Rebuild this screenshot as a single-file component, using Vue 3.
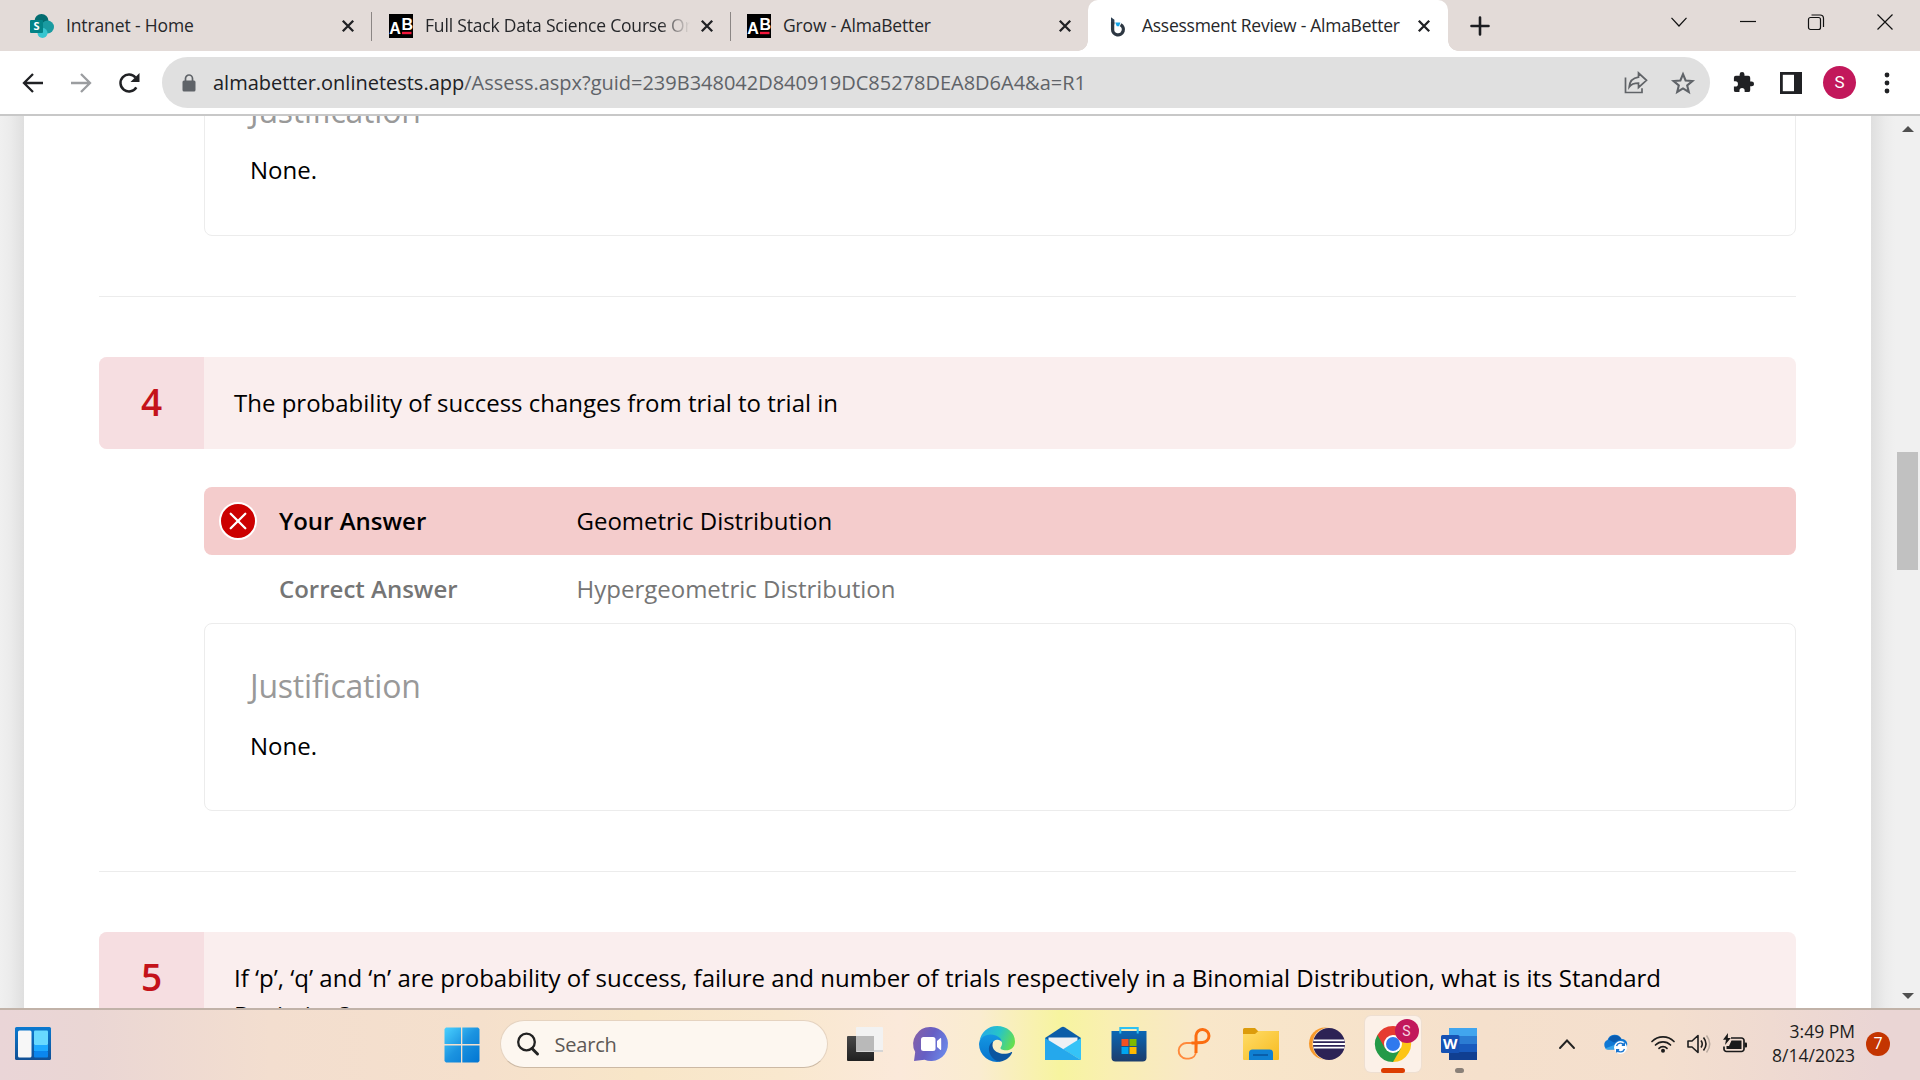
<script setup>
import { ref } from 'vue'

const tabs = ref([
  { title: 'Intranet - Home', icon: 'sp', spacing: '-0.13px' },
  { title: 'Full Stack Data Science Course Online', icon: 'ab', spacing: '-0.18px' },
  { title: 'Grow - AlmaBetter', icon: 'ab', spacing: '-0.17px' },
  { title: 'Assessment Review - AlmaBetter', icon: 'b', active: true, spacing: '-0.27px' },
])

const questions = ref([
  { number: 3, justification: 'None.', partial: true },
  {
    number: 4,
    text: 'The probability of success changes from trial to trial in',
    yours: 'Geometric Distribution',
    correct: 'Hypergeometric Distribution',
    justification: 'None.',
  },
  {
    number: 5,
    text: 'If ‘p’, ‘q’ and ‘n’ are probability of success, failure and number of trials respectively in a Binomial Distribution, what is its Standard Deviation?',
  },
])
</script>

<template>
  <div class="screen">
    <header class="tabstrip">
      <div v-for="(tab, i) in tabs" :key="i" class="tab" :class="['tab-' + i, { active: tab.active }]">
        <svg v-if="tab.icon === 'sp'" class="fav" viewBox="0 0 24 24">
          <circle cx="11.5" cy="7" r="7" fill="#036c70" />
          <circle cx="17.5" cy="13" r="6.5" fill="#1a9ba1" />
          <circle cx="12.5" cy="19" r="5" fill="#37c6d0" />
          <rect x="0" y="6" width="13" height="13" rx="1" fill="#038387" />
          <text x="6.5" y="16.4" text-anchor="middle" class="fav-s">S</text>
        </svg>
        <svg v-else-if="tab.icon === 'ab'" class="fav" viewBox="0 0 24 24">
          <rect width="24" height="24" fill="#000" />
          <text x="0.3" y="20.2" class="fav-ab">A</text>
          <text x="12.6" y="16.4" class="fav-ab">B</text>
          <rect x="13" y="17.8" width="9.5" height="2.4" fill="#f5163b" />
        </svg>
        <svg v-else class="fav" viewBox="0 0 24 24">
          <path d="M5 3.200l3.400 2.600v4.400L5 13z" fill="#2d3e50" />
          <path d="M6.600 8v7.500a5.400 5.400 0 1 0 8-4.700" fill="none" stroke="#2d3742" stroke-width="3.300" />
          <path d="M9.200 8.500h5.200l-1.300 3.800h-2.300z" fill="#14a5ea" />
        </svg>
        <span class="title" :style="{ letterSpacing: tab.spacing }">{{ tab.title }}</span>
        <svg class="x" viewBox="0 0 14 14"><path d="M1.800 1.800l10.400 10.400M12.200 1.800L1.800 12.200" stroke="#202124" stroke-width="2.300" /></svg>
      </div>
      <svg class="plus" viewBox="0 0 18 18"><path d="M9 0.500v17M0.500 9h17" stroke="#1b1c20" stroke-width="2.600" stroke-linecap="round" /></svg>
      <div class="winbtns">
        <svg viewBox="0 0 18 18"><path d="M1.500 4.800L9 13l7.500-8.200" /></svg>
        <svg viewBox="0 0 18 18"><path d="M1 8.500h16" /></svg>
        <svg viewBox="0 0 18 18"><rect x="1.500" y="4.500" width="12" height="12" rx="2" /><path d="M4.500 2h8.500a3.500 3.500 0 0 1 3.500 3.500v8.500" /></svg>
        <svg viewBox="0 0 18 18"><path d="M1.500 1.500l15 15M16.500 1.500l-15 15" /></svg>
      </div>
    </header>

    <nav class="toolbar">
      <svg class="nav back" viewBox="0 0 22 22"><path d="M21 11H2.500M11 2L2 11l9 9" fill="none" stroke="#202124" stroke-width="2.300" /></svg>
      <svg class="nav fwd" viewBox="0 0 22 22"><path d="M1 11h18.500M11 2l9 9-9 9" fill="none" stroke="#9b9da0" stroke-width="2.300" /></svg>
      <svg class="nav reload" viewBox="0 0 22 22">
        <path d="M18.300 15.300A8.500 8.500 0 1 1 17.500 5.500" fill="none" stroke="#202124" stroke-width="2.500" />
        <path d="M21.500 1v9h-9z" fill="#202124" />
      </svg>
      <div class="omnibox">
        <svg class="lock" viewBox="0 0 14 18"><rect x="0.500" y="6.500" width="13" height="11" rx="1.500" fill="#5f6368" /><path d="M3.500 7V4.500a3.500 3.500 0 0 1 7 0V7" fill="none" stroke="#5f6368" stroke-width="1.700" /></svg>
        <span class="url"><b>almabetter.onlinetests.app</b><i>/Assess.aspx?guid=239B348042D840919DC85278DEA8D6A4&amp;a=R1</i></span>
        <svg class="share" viewBox="0 0 24 24"><path d="M1.500 6.500V21.500H18v-4.300M14.500 2L22.500 9.300l-8 7.200v-4.300c-4.300 0-7.300 1-9.300 3.800 .4-5.400 3.500-9 9.300-9.800z" fill="none" stroke="#606367" stroke-width="1.700" /></svg>
        <svg class="star" viewBox="0 0 24 24"><path d="M12 3.200l2.600 6.300 6.800.5-5.200 4.400 1.600 6.600-5.800-3.600-5.800 3.600 1.600-6.600-5.200-4.400 6.800-.5z" fill="none" stroke="#5f6368" stroke-width="2.100" /></svg>
      </div>
      <svg class="puzzle" viewBox="0 0 24 24"><path d="M20.500 11H19V7a2 2 0 0 0-2-2h-4V3.500a2.500 2.500 0 0 0-5 0V5H4a2 2 0 0 0-2 2v3.800h1.500a2.700 2.700 0 0 1 0 5.400H2V20a2 2 0 0 0 2 2h3.800v-1.500a2.700 2.700 0 0 1 5.400 0V22H17a2 2 0 0 0 2-2v-4h1.500a2.500 2.500 0 0 0 0-5z" fill="#202124" /></svg>
      <svg class="panel" viewBox="0 0 22 22"><rect x="1.400" y="1.400" width="19.200" height="19.200" fill="none" stroke="#202124" stroke-width="2.800" /><rect x="14" y="1" width="7" height="20" fill="#202124" /></svg>
      <div class="avatar">S</div>
      <svg class="dots" viewBox="0 0 6 22"><circle cx="3" cy="3" r="2.400" /><circle cx="3" cy="11" r="2.400" /><circle cx="3" cy="19" r="2.400" /></svg>
    </nav>

    <main class="page">
      <div class="gutter left"></div>
      <div class="sheet">
        <section v-for="q in questions" :key="q.number" class="question" :class="{ partial: q.partial }">
          <div v-if="q.text" class="qhead">
            <div class="num">{{ q.number }}</div>
            <div class="qtext">{{ q.text }}</div>
          </div>
          <div v-if="q.yours" class="answer wrong">
            <svg class="mark" viewBox="0 0 38 38"><circle cx="19" cy="19" r="18" fill="#c00" stroke="#fff" stroke-width="2" /><path d="M11.700 11.700l14.600 14.600M26.300 11.700L11.700 26.300" stroke="#fff" stroke-width="2.300" stroke-linecap="round" /></svg>
            <strong>Your Answer</strong><span>{{ q.yours }}</span>
          </div>
          <div v-if="q.correct" class="answer right"><strong>Correct Answer</strong><span>{{ q.correct }}</span></div>
          <div v-if="q.justification" class="just">
            <h3>Justification</h3>
            <p>{{ q.justification }}</p>
          </div>
          <div v-if="q.justification" class="rule"></div>
        </section>
      </div>
      <div class="gutter rightside"></div>
      <div class="scrollbar">
        <svg viewBox="0 0 12 6"><path d="M0 6L6 0l6 6z" fill="#505050" /></svg>
        <div class="thumb"></div>
        <svg class="down" viewBox="0 0 12 6"><path d="M0 0h12L6 6z" fill="#505050" /></svg>
      </div>
    </main>

    <footer class="taskbar">
      <svg class="widgets" viewBox="0 0 36 33">
        <defs><linearGradient id="wg" x2="0" y2="1"><stop stop-color="#0a79d0" /><stop offset="1" stop-color="#114f94" /></linearGradient></defs>
        <rect width="36" height="33" rx="1.500" fill="url(#wg)" />
        <rect x="3" y="3.500" width="13.500" height="27" rx="1.500" fill="#f7f7f7" />
        <rect x="19" y="3.500" width="14" height="14.500" rx="1" fill="#68d9ff" />
        <rect x="19" y="18" width="14" height="6" fill="#1da9ff" />
        <rect x="19" y="24" width="14" height="6.500" rx="1" fill="#0b86ee" />
      </svg>
      <svg class="start" viewBox="0 0 36 36">
        <defs><linearGradient id="st" x2="1" y2="1"><stop stop-color="#4ad1ff" /><stop offset=".5" stop-color="#1b93e0" /><stop offset="1" stop-color="#0275d2" /></linearGradient></defs>
        <path d="M2 0.500h15v16.500H0.500V2zM18.300 0.500H34l1.500 1.500v15H18.300zM0.500 18.600H17v16.900H2L0.500 34zM18.300 18.600h17.200V34L34 35.500H18.300z" fill="url(#st)" />
      </svg>
      <div class="search">
        <svg viewBox="0 0 24 24"><circle cx="10.500" cy="10" r="8.300" fill="none" stroke="#222" stroke-width="2.300" /><path d="M16 16.500l5.500 5.500" stroke="#222" stroke-width="3" stroke-linecap="round" /></svg>
        <span>Search</span>
      </div>
      <div class="apps">
        <div class="app">
          <svg viewBox="0 0 36 36">
            <defs><linearGradient id="tv" x2="0" y2="1"><stop stop-color="#484848" /><stop offset="1" stop-color="#202020" /></linearGradient></defs>
            <rect x="0" y="10" width="27" height="25" rx="1" fill="url(#tv)" /><rect x="9" y="1" width="27" height="25" rx="1" fill="#f2f2f2" /><rect x="9" y="10" width="18" height="15" fill="#b9b9b9" /><path d="M9 25h27" stroke="#b9b9b9" />
          </svg>
        </div>
        <div class="app">
          <svg viewBox="0 0 36 36">
            <defs><linearGradient id="ct" x1="0" y1=".2" x2="1" y2=".6"><stop stop-color="#8560a8" /><stop offset=".5" stop-color="#665fc4" /><stop offset="1" stop-color="#6a86e8" /></linearGradient></defs>
            <path d="M18 1a17 17 0 1 1-6.500 32.700L1 35l1.200-9A17 17 0 0 1 18 1z" fill="url(#ct)" />
            <rect x="8" y="11" width="14.500" height="14" rx="2.500" fill="#fff" /><path d="M24 15l3.200-2.700q1-.7 1 .7v10q0 1.400-1 .7L24 21z" fill="#fff" />
          </svg>
        </div>
        <div class="app">
          <svg viewBox="0 0 36 36">
            <defs>
              <linearGradient id="eg" x1="0" y1=".3" x2="1" y2=".6"><stop stop-color="#25a9e8" /><stop offset=".5" stop-color="#27c4c8" /><stop offset="1" stop-color="#66df4d" /></linearGradient>
              <linearGradient id="eb" x2="0" y2="1"><stop stop-color="#1497e2" /><stop offset="1" stop-color="#0873cc" /></linearGradient>
            </defs>
            <path d="M0.500 15.500C2 6 9 0 18 0c10 0 18 6.500 18 15.500 0 5.500-4 8.800-9 8.800-4 0-5.500-1.300-5.500-2.300 0-.8 1.600-2 1.600-4.700C23 13 18 9.500 12 9.500 5 9.500 1.500 13 .5 15.500z" fill="url(#eg)" />
            <path d="M0 18C0.500 12 5.500 8.600 11.500 8.600c7 0 11 4 11.500 7.500-1-1.500-2.800-2.500-5-2.300-4 .4-6.500 5-5.500 10 1 6 5 10 9.500 11.700A18 18 0 0 1 0 18z" fill="url(#eb)" />
            <path d="M14 15.500c-4 2.500-5.200 7.500-3 12.500 2.300 5 6.500 7.500 11 7.500 5-1 9-4.500 11-8.500.4-.9-.3-1.200-1-.8-7 3.500-18 .8-18.500-6.500 0-1.700.2-3 .5-4.200z" fill="#0c55a0" />
          </svg>
        </div>
        <div class="app">
          <svg viewBox="0 0 36 36">
            <path d="M0 12L16 1.500q2-1.300 4 0L36 12v6H0z" fill="#0b5da8" /><path d="M3.500 11.500h29V25h-29z" fill="#eef1f5" /><path d="M36 12L18 23.300 36 34z" fill="#35c3f7" /><path d="M0 12v22h36z" fill="#25a8ec" />
          </svg>
        </div>
        <div class="app">
          <svg viewBox="0 0 36 36">
            <defs><linearGradient id="so" x2="0" y2="1"><stop stop-color="#0a67b5" /><stop offset="1" stop-color="#1c3d6c" /></linearGradient></defs>
            <path d="M0.500 5h35v26.500a4 4 0 0 1-4 4h-27a4 4 0 0 1-4-4z" fill="url(#so)" /><path d="M9.300 7.500V2h17.400v5.500" fill="none" stroke="#2dc1f2" stroke-width="2" />
            <path d="M10.500 13h7v7h-7z" fill="#f25022" /><path d="M18.500 13h7v7h-7z" fill="#7fba00" /><path d="M10.500 21h7v7h-7z" fill="#00a4ef" /><path d="M18.500 21h7v7h-7z" fill="#ffb900" />
          </svg>
        </div>
        <div class="app">
          <svg viewBox="0 0 36 36">
            <path d="M19.500 17H10a7.500 7.500 0 0 0-1 15.600h3c4 0 7-3 7-8z" fill="none" stroke="#ff8a3c" stroke-width="1.900" />
            <path d="M19 27V9.500a6.500 6.500 0 1 1 6.500 6.900L14.500 17" fill="none" stroke="#fb6d10" stroke-width="3" />
          </svg>
        </div>
        <div class="app">
          <svg viewBox="0 0 36 36">
            <defs><linearGradient id="fo" x2="1" y2="1"><stop stop-color="#ffdc68" /><stop offset="1" stop-color="#f7bb20" /></linearGradient></defs>
            <path d="M0 3.500a1.500 1.500 0 0 1 1.500-1.500H12l3 3h20a1 1 0 0 1 1 1v6H0z" fill="#dc9c0c" /><path d="M0 8h12l3.500-3H35a1 1 0 0 1 1 1v27a1 1 0 0 1-1 1H1a1 1 0 0 1-1-1z" fill="url(#fo)" />
            <path d="M6 34V27a3.500 3.500 0 0 1 3.500-3.500h17A3.500 3.500 0 0 1 30 27v7z" fill="#0f80d2" /><path d="M10 29h15" stroke="#0a5ba4" stroke-width="1.800" />
          </svg>
        </div>
        <div class="app">
          <svg viewBox="0 0 36 36"><circle cx="16" cy="17.500" r="16" fill="#f79a2c" /><circle cx="20" cy="18" r="16.500" fill="#fae4c8" /><circle cx="20" cy="18" r="16" fill="#2c2255" /><path d="M4.500 14.400h31M4 18h32M4.500 21.600h31" stroke="#fff" stroke-width="1.900" /></svg>
        </div>
        <div class="app current">
          <svg viewBox="0 0 36 36">
            <path d="M18 18L2.410 9A18 18 0 0 1 33.590 9z" fill="#e63c30" /><path d="M18 18L33.590 9A18 18 0 0 1 18 36z" fill="#fdc516" /><path d="M18 18v18A18 18 0 0 1 2.410 9z" fill="#249a48" />
            <path d="M18 9h15.600l-7.800 13.500z" fill="#fdc516" /><path d="M25.800 22.500L18 36 10.200 22.500z" fill="#249a48" /><path d="M10.200 22.500L2.410 9 18 9z" fill="#e63c30" /><circle cx="18" cy="18" r="9" fill="#fff" /><circle cx="18" cy="18" r="7" fill="#3079ee" />
          </svg>
          <span class="badge">S</span>
        </div>
        <div class="app word">
          <svg viewBox="0 0 36 36">
            <path d="M8 2h28v8H8z" fill="#41a5ee" /><path d="M8 10h28v8H8z" fill="#2b7cd3" /><path d="M8 18h28v8H8z" fill="#185abd" /><path d="M8 26h28v8H8z" fill="#103f91" />
            <rect x="0" y="9" width="18.500" height="18" rx="1.500" fill="#1652b4" /><text x="9.200" y="23" text-anchor="middle" class="w">W</text>
          </svg>
        </div>
      </div>
      <div class="tray">
        <svg class="up" viewBox="0 0 16 10"><path d="M1 9l7-7.500L15 9" fill="none" stroke="#222" stroke-width="1.900" stroke-linecap="round" /></svg>
        <svg class="cloud" viewBox="0 0 24 20">
          <path d="M5 15.500A5 5 0 0 1 4.500 6 7.500 7.500 0 0 1 18.500 5a5 5 0 0 1 1 10.500z" fill="#1078d4" /><path d="M4 15.500a4.500 4.500 0 0 1-2-1L14 10v5.500z" fill="#35a4ea" /><path d="M5.500 5.500A7.500 7.500 0 0 1 18.500 5L11 8.500z" fill="#0a5cb0" />
          <circle cx="17.500" cy="13.500" r="6.500" fill="#fff" /><path d="M13.500 12a4.200 4.200 0 0 1 7.500-1M21.500 15a4.200 4.200 0 0 1-7.500 1M21.300 8.500V11.300h-2.500M13.700 18.500v-2.800h2.500" fill="none" stroke="#1a75cf" stroke-width="1.400" />
        </svg>
        <svg class="wifi" viewBox="0 0 24 18"><g fill="none" stroke="#1d1d1d" stroke-width="1.700" stroke-linecap="round"><path d="M1 6.500a15.500 15.500 0 0 1 22 0M4.500 10a10.600 10.600 0 0 1 15 0M8 13.300a5.600 5.600 0 0 1 8 0" /></g><circle cx="12" cy="15.700" r="2" fill="#1d1d1d" /></svg>
        <svg class="vol" viewBox="0 0 24 20"><path d="M1 7h4l6-5.500v17L5 13H1z M14 6.500q2.500 3.500 0 7M16.500 3.500q5 6.500 0 13" fill="none" stroke="#1d1d1d" stroke-width="1.600" stroke-linejoin="round" /><path d="M19.500 1.500q6.500 8.500 0 17" fill="none" stroke="#b9aaa0" stroke-width="1.500" /></svg>
        <svg class="bat" viewBox="0 0 24 20"><path d="M8 4h10.500a2.500 2.500 0 0 1 2.500 2.500v8.500a2.500 2.500 0 0 1-2.500 2.500h-15A2.500 2.500 0 0 1 1 15V12.500" fill="none" stroke="#1a1a1a" stroke-width="1.700" /><path d="M8.500 6.500h10v8.500h-15V12h2.500z" fill="#1a1a1a" /><rect x="21.500" y="8.500" width="2.500" height="5" rx="1" fill="#1a1a1a" /><path d="M5 -1L0 5.800h3L2 11l5.800-7H4.800z" fill="#1a1a1a" /></svg>
        <div class="clock"><span>3:49 PM</span><span>8/14/2023</span></div>
        <div class="count">7</div>
      </div>
    </footer>
  </div>
</template>

<style>
body { margin: 0; overflow: hidden; }
</style>

<style scoped>
* { box-sizing: border-box; }
.screen { width: 1920px; height: 1080px; display: flex; flex-direction: column; overflow: hidden; background: #fff; font-family: "Open Sans", "Noto Sans", sans-serif; }
svg { display: block; flex: none; overflow: visible; }

.tabstrip { height: 51px; flex: none; display: flex; align-items: center; background: #e3dbd8; position: relative; }
.tab { height: 51px; display: flex; align-items: center; position: relative; flex: none; }
.tab-0 { width: 371px; padding: 0 16px 0 30px; }
.tab-1 { width: 359px; padding: 0 16px 0 18px; }
.tab-2 { width: 358px; padding: 0 16px 0 17px; }
.tab-3 { width: 360px; padding: 0 17.500px 0 18px; }
.tab-0::after, .tab-1::after { content: ""; position: absolute; right: -1px; top: 12px; width: 1px; height: 29px; background: #8b8684; }
.active { background: #fff; border-radius: 10px 10px 0 0; }
.active::before, .active::after { content: ""; position: absolute; bottom: 0; width: 10px; height: 10px; }
.active::before { left: -10px; background: radial-gradient(circle at 0 0, transparent 9.500px, #fff 10px); }
.active::after { right: -10px; background: radial-gradient(circle at 100% 0, transparent 9.500px, #fff 10px); }
.fav { width: 24px; height: 24px; }
.fav-s { font: 700 11px "Open Sans", sans-serif; fill: #fff; }
.fav-ab { font: 700 16px "Liberation Sans", sans-serif; fill: #fff; }
.title { flex: 1; margin: 0 12px; padding-bottom: 1px; font-size: 17.500px; line-height: 26px; color: #26272a; white-space: nowrap; overflow: hidden; min-width: 0; }
.tab-1 .title { margin-right: 8px; mask-image: linear-gradient(90deg, #000 235px, transparent 265px); }
.tab-3 .title { margin: 0 8px 0 12px; }
.x { width: 14px; height: 14px; }
.plus { width: 18px; height: 18px; margin-left: 23px; }
.winbtns { margin-left: auto; display: flex; gap: 50.700px; padding: 0 26px 8px 0; }
.winbtns svg { width: 18px; height: 18px; fill: none; stroke: #111; stroke-width: 1.200; }

.toolbar { height: 65px; flex: none; display: flex; align-items: center; border-bottom: 2px solid #c8c8c8; padding-left: 22px; background: #fff; }
.nav { width: 22px; height: 22px; }
.fwd { margin-left: 26px; }
.reload { margin-left: 26px; }
.omnibox { margin-left: 22px; width: 1548px; height: 51px; border-radius: 26px; background: #e0e0e0; display: flex; align-items: center; padding: 0 15px 0 20px; flex: none; }
.lock { width: 14px; height: 18px; }
.url { margin-left: 17px; font-size: 20px; line-height: 30px; letter-spacing: -0.010px; white-space: nowrap; flex: 1; }
.url b { font-weight: 400; color: #202124; }
.url i { font-style: normal; color: #5f6368; }
.share { width: 24px; height: 24px; margin-right: 23.500px; }
.star { width: 24px; height: 24px; }
.puzzle { width: 23px; height: 23px; margin-left: 22px; }
.panel { width: 22px; height: 22px; margin-left: 25px; }
.avatar { width: 33px; height: 33px; margin-left: 21px; border-radius: 50%; background: #c2185b; color: #fff; font: 17px/33px Roboto, sans-serif; text-align: center; flex: none; }
.dots { width: 6px; height: 22px; margin-left: 28px; fill: #202124; }

.page { height: 892px; flex: none; display: flex; overflow: hidden; background: #f0f0f0; }
.gutter { flex: none; }
.left { width: 24px; background: linear-gradient(90deg, #f0f0f0, #ececec 40%, #dfdfdf); }
.rightside { width: 24px; background: linear-gradient(270deg, #f0f0f0, #ececec 40%, #dfdfdf); }
.sheet { width: 1847px; flex: none; background: #fff; padding: 0 75px; overflow: hidden; }
.question { display: flex; flex-direction: column; color: #000; font-size: 24px; line-height: 36px; }
.partial { margin-top: -68px; }
.qhead { display: flex; height: 92px; border-radius: 8px; overflow: hidden; background: #faeeee; }
.question:last-child .qhead { height: 130px; }
.num { width: 105px; flex: none; background: #f6dee1; color: #c4121a; font-size: 37px; font-weight: 600; line-height: 90px; text-align: center; }
.qtext { padding: 27px 30px; line-height: 37px; }
.answer { margin-left: 105px; height: 68px; display: flex; align-items: center; border-radius: 8px; padding-left: 75px; }
.answer strong { width: 297.500px; font-weight: 600; }
.wrong { margin-top: 38px; background: #f4cccc; padding-left: 15px; }
.mark { width: 38px; height: 38px; margin-right: 22px; }
.right { color: #757575; }
.just { margin-left: 105px; height: 188px; border: 1px solid #ececec; border-radius: 8px; padding: 38px 45px; }
.just h3 { margin: 0; font-size: 32px; line-height: 48px; font-weight: 400; letter-spacing: -0.200px; color: #999; }
.just p { margin: 17px 0 0; line-height: 38px; }
.partial .just p { margin-top: 16px; }
.rule { height: 1px; margin: 60px 0; background: #ececec; }
.scrollbar { width: 25px; flex: none; position: relative; display: flex; flex-direction: column; align-items: center; padding: 10px 0 9px; }
.scrollbar svg { width: 12px; height: 6px; }
.thumb { width: 21px; height: 118px; margin-top: 320px; background: #c1c1c1; }
.down { margin-top: auto; }

.taskbar { height: 72px; flex: none; border-top: 2px solid #c1b2a8; display: flex; align-items: flex-start; position: relative; background: linear-gradient(90deg, #ead5d7 0, #ead6d4 90px, #f3decf 270px, #f5e0cc 480px, #f8e6c8 640px, #f9e8ce 780px, #fbe9da 900px, #faecd0 980px, #f7f49f 1060px, #f9efb2 1110px, #f9e7c9 1200px, #f5e0cc 1480px, #f4dfce 1660px, #ead5d4 1880px); }
.widgets { width: 36px; height: 33px; margin: 17px 0 0 15px; }
.start { width: 36px; height: 36px; margin: 17px 0 0 392.500px; }
.search { margin: 10px 0 0 20px; width: 328px; height: 48px; border-radius: 24px; background: #fdf7f0; border: 1.500px solid #e5d3c0; border-bottom-color: #ccb9a4; display: flex; align-items: center; padding-left: 15px; flex: none; }
.search svg { width: 24px; height: 24px; }
.search span { margin-left: 15px; font-size: 20px; color: #5d5956; letter-spacing: -0.200px; }
.apps { display: flex; margin: 6px 0 0 9px; gap: 10px; }
.app { width: 56px; height: 56px; padding: 10px; position: relative; flex: none; }
.app svg { width: 36px; height: 36px; }
.current { background: #fcf1e8; border-radius: 6px; box-shadow: 0 0 0 1px #eedfd1; }
.current::after { content: ""; position: absolute; left: 16px; top: 52px; width: 24px; height: 5px; border-radius: 3px; background: #dc3c00; }
.word::after { content: ""; position: absolute; left: 24px; top: 52px; width: 9px; height: 5px; border-radius: 3px; background: #8a8078; }
.badge { position: absolute; left: 30px; top: 3px; width: 24px; height: 24px; border-radius: 50%; background: #c2185b; color: #f6d5e1; font: 14px/24px Roboto, sans-serif; text-align: center; }
.w { font: 700 15px "Open Sans", sans-serif; fill: #fff; }
.tray { position: absolute; right: 30px; top: 6px; height: 56px; display: flex; align-items: center; color: #1d1d1d; }
.up { width: 16px; height: 10px; margin-right: 28px; }
.cloud { width: 24px; height: 20px; margin-right: 24px; }
.wifi { width: 24px; height: 18px; margin-right: 12px; }
.vol { width: 24px; height: 20px; margin-right: 12px; }
.bat { width: 24px; height: 20px; }
.clock { width: 108px; display: flex; flex-direction: column; align-items: flex-end; font-size: 17.500px; line-height: 24px; letter-spacing: 0; padding-bottom: 2px; }
.count { width: 24px; height: 24px; margin-left: 11px; border-radius: 50%; background: #c43501; color: #fff; font-size: 16px; line-height: 23px; text-align: center; }
</style>
